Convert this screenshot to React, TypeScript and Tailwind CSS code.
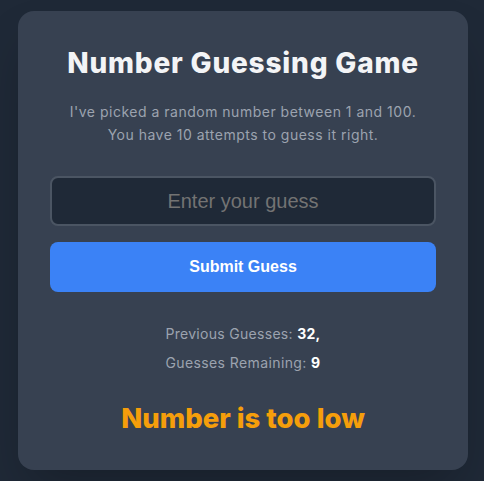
import { useState } from 'react';

export default function App() {
  const [guess, setGuess] = useState('');
  const previous = [32];
  const remaining = 9;

  return (
    <div className="min-h-screen bg-[#1f2937] pt-[11px] pl-[18px]" style={{ fontFamily: 'Inter, "Noto Sans", sans-serif' }}>
      <div className="w-[450px] h-[459px] bg-[#374151] rounded-2xl shadow-2xl px-8 pt-[34px] flex flex-col items-center text-center">
        <h1 className="text-[28px] leading-[36px] font-extrabold tracking-[0.8px] text-[#f3f4f6]">Number Guessing Game</h1>
        <p className="mt-[19px] text-[14px] leading-[23px] tracking-[0.5px] text-[#9ca3af]">
          I've picked a random number between 1 and 100.
          <br />
          You have 10 attempts to guess it right.
        </p>

        <input
          value={guess}
          onChange={(e) => setGuess(e.target.value)}
          placeholder="Enter your guess"
          className="mt-[30px] w-full h-[50px] rounded-lg bg-[#1f2937] border-2 border-[#4b5563] text-center text-[20px] text-white placeholder:text-[#737373] outline-none"
          style={{ fontFamily: '"Liberation Sans", Arial, sans-serif' }}
        />
        <button
          className="mt-4 w-full h-[50px] rounded-lg bg-[#3b82f6] text-white font-bold text-[16px]"
          style={{ fontFamily: '"Liberation Sans", Arial, sans-serif' }}
        >
          Submit Guess
        </button>

        <p className="mt-[31px] text-[14px] leading-[22px] tracking-[0.3px] text-[#9ca3af]">
          Previous Guesses: <span className="font-bold text-white">{previous.join(', ')},</span>
        </p>
        <p className="mt-[7px] text-[14px] leading-[22px] tracking-[0.4px] text-[#9ca3af]">
          Guesses Remaining: <span className="font-bold text-white">{remaining}</span>
        </p>

        <p className="mt-[26px] text-[27.5px] leading-[36px] font-extrabold text-[#f59e0b]">Number is too low</p>
      </div>
    </div>
  );
}
